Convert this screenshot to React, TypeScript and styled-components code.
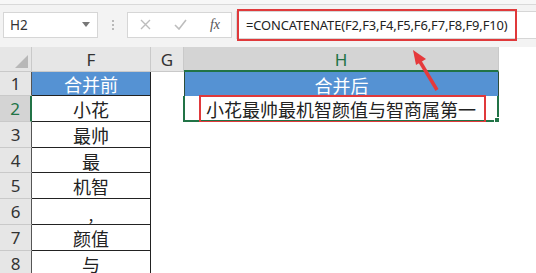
import React from "react";
import styled, { createGlobalStyle } from "styled-components";

const Global = createGlobalStyle`
  html, body { margin: 0; padding: 0; background: #fff; }
  body { width: 536px; height: 273px; overflow: hidden; font-family: "Noto Sans", "Noto Sans CJK SC", sans-serif; }
`;

const Page = styled.div`
  position: relative;
  width: 536px;
  height: 273px;
  overflow: hidden;
  display: flex;
  flex-direction: column;
`;

const Toolbar = styled.div`
  flex-shrink: 0;
  height: 47px;
  box-sizing: border-box;
  background: #f3f3f3;
  border-top: 4px solid #f7f7f7;
  box-shadow: inset 0 1px 0 #d9d9d9;
  display: flex;
  align-items: center;
  padding: 0 0 2px 3px;
`;

const NameBox = styled.div`
  width: 95px;
  height: 26px;
  box-sizing: border-box;
  background: #fff;
  border: 1px solid #d6d6d6;
  display: flex;
  align-items: center;
  justify-content: space-between;
  padding: 0 7px 0 6px;
  font-family: "Noto Sans", sans-serif;
  font-size: 13.5px;
  color: #333;
`;

const Caret = styled.span`
  width: 0;
  height: 0;
  border-left: 4px solid transparent;
  border-right: 4px solid transparent;
  border-top: 5px solid #777;
`;

const Dots = styled.div`
  width: 29px;
  display: flex;
  flex-direction: column;
  align-items: center;
  gap: 2px;
  & > span { width: 2px; height: 2px; background: #b9b9b9; }
`;

const FxBox = styled.div`
  width: 105px;
  height: 26px;
  box-sizing: border-box;
  background: #fff;
  border: 1px solid #d6d6d6;
  display: flex;
  align-items: center;
  justify-content: space-between;
  padding: 0 11px 0 12px;
`;

const FxText = styled.span`
  font-family: "Liberation Serif", serif;
  font-style: italic;
  font-size: 14px;
  color: #555;
`;

const FormulaWrap = styled.div`
  position: relative;
  margin-left: 4px;
  flex: 1;
  height: 28px;
  box-sizing: border-box;
  background: #fff;
  border: 1px solid #d6d6d6;
  border-right: none;
  display: flex;
  align-items: center;
  padding-left: 9px;
  font-family: "Noto Sans", sans-serif;
  font-size: 12.9px;
  color: #222;
  letter-spacing: -0.1px;
`;

const RedFrame = styled.div`
  position: absolute;
  left: 0px;
  top: -3px;
  width: 280px;
  height: 32px;
  box-sizing: border-box;
  border: 2.5px solid #e0393b;
  pointer-events: none;
`;

const Grid = styled.div`
  flex-shrink: 0;
  display: grid;
  grid-template-columns: 32px 119px 33px 315px 1fr;
  grid-template-rows: 25px 24px 26px 26px 25px 26px 26px 26px 26px;
  font-family: "Noto Sans CJK SC", "Noto Sans", sans-serif;
`;

const Corner = styled.div`
  position: relative;
  background: #e6e6e6;
  border-right: 1px solid #c9c9c9;
  border-bottom: 1px solid #c9c9c9;
  box-sizing: border-box;
  &::after {
    content: "";
    position: absolute;
    right: 3px;
    bottom: 3px;
    width: 0;
    height: 0;
    border-left: 13px solid transparent;
    border-bottom: 13px solid #b8b8b8;
  }
`;

const ColHeader = styled.div<{ $selected?: boolean; $blank?: boolean }>`
  box-sizing: border-box;
  background: ${(p) => (p.$blank ? "#fff" : p.$selected ? "#d4d4d4" : "#e6e6e6")};
  border-right: ${(p) => (p.$blank ? "none" : "1px solid #c9c9c9")};
  border-bottom: ${(p) => (p.$blank ? "none" : p.$selected ? "2px solid #217346" : "1px solid #c9c9c9")};
  display: flex;
  align-items: center;
  justify-content: center;
  font-family: "Noto Sans", sans-serif;
  font-size: 17px;
  color: ${(p) => (p.$selected ? "#217346" : "#333")};
  padding-top: 1px;
`;

const RowHeader = styled.div<{ $selected?: boolean }>`
  box-sizing: border-box;
  background: ${(p) => (p.$selected ? "#d4d4d4" : "#e6e6e6")};
  border-right: ${(p) => (p.$selected ? "2px solid #217346" : "1px solid #555")};
  border-bottom: 1px solid #c9c9c9;
  display: flex;
  align-items: center;
  justify-content: center;
  font-family: "Noto Sans", sans-serif;
  font-size: 17px;
  color: ${(p) => (p.$selected ? "#217346" : "#333")};
`;

const Cell = styled.div<{ $blue?: boolean; $boxed?: boolean; $align?: string }>`
  position: relative;
  box-sizing: border-box;
  background: ${(p) => (p.$blue ? "#5592d3" : "#fff")};
  color: ${(p) => (p.$blue ? "#fff" : "#222")};
  border-right: ${(p) => (p.$boxed ? "1px solid #222" : "none")};
  border-bottom: ${(p) => (p.$boxed ? "1px solid #222" : "none")};
  display: flex;
  align-items: center;
  justify-content: ${(p) => p.$align || "center"};
  font-size: 18px;
  line-height: 1;
  white-space: nowrap;
  padding-top: 1px;
`;

const Selected = styled(Cell)`
  border: 2px solid #217346;
  border-top: none;
  justify-content: flex-start;
  padding-left: 21px;
  margin-left: -1px;
`;

const FillHandle = styled.span`
  position: absolute;
  right: -4px;
  bottom: -4px;
  width: 5px;
  height: 5px;
  background: #217346;
  border: 1px solid #fff;
`;

const CellRedFrame = styled.div`
  position: absolute;
  left: 14px;
  top: -1px;
  width: 287px;
  height: 28px;
  box-sizing: border-box;
  border: 2.5px solid #e0393b;
  pointer-events: none;
`;

const Arrow = styled.svg`
  position: absolute;
  left: 400px;
  top: 44px;
  pointer-events: none;
`;

const Comma = styled.span`
  font-size: 16px;
  margin-top: 4px;
`;

const fValues = ["小花", "最帅", "最", "机智", ",", "颜值", "与"];

export default function App() {
  return (
    <>
      <Global />
      <Page>
        <Toolbar>
          <NameBox>
            <span>H2</span>
            <Caret />
          </NameBox>
          <Dots>
            <span />
            <span />
            <span />
          </Dots>
          <FxBox>
            <svg width="11" height="11" viewBox="0 0 11 11">
              <path d="M1 1 L10 10 M10 1 L1 10" stroke="#bdbdbd" strokeWidth="1.4" fill="none" />
            </svg>
            <svg width="13" height="11" viewBox="0 0 13 11">
              <path d="M1 6 L5 10 L12 1" stroke="#bdbdbd" strokeWidth="1.6" fill="none" />
            </svg>
            <FxText>fx</FxText>
          </FxBox>
          <FormulaWrap>
            =CONCATENATE(F2,F3,F4,F5,F6,F7,F8,F9,F10)
            <RedFrame />
          </FormulaWrap>
        </Toolbar>
        <Grid>
          <Corner />
          <ColHeader>F</ColHeader>
          <ColHeader>G</ColHeader>
          <ColHeader $selected>H</ColHeader>
          <ColHeader $blank />

          <RowHeader>1</RowHeader>
          <Cell $blue $boxed>合并前</Cell>
          <Cell />
          <Cell $blue style={{ borderLeft: "1px solid #2d4d3a", borderRight: "1px solid #2d4d3a" }}>合并后</Cell>
          <Cell />

          <RowHeader $selected>2</RowHeader>
          <Cell $boxed>{fValues[0]}</Cell>
          <Cell />
          <Selected>
            小花最帅最机智颜值与智商属第一
            <CellRedFrame />
            <FillHandle />
          </Selected>
          <Cell />

          {fValues.slice(1).map((v, i) => (
            <React.Fragment key={i}>
              <RowHeader>{i + 3}</RowHeader>
              <Cell $boxed>{v === "," ? <Comma>,</Comma> : v}</Cell>
              <Cell />
              <Cell />
              <Cell />
            </React.Fragment>
          ))}
        </Grid>
        <Arrow width="50" height="52" viewBox="0 0 50 52">
          <path d="M37 46 L19 16" stroke="#e5393b" strokeWidth="3.5" fill="none" />
          <path d="M13 6 L26 15 L16 21 Z" fill="#e5393b" />
        </Arrow>
      </Page>
    </>
  );
}
